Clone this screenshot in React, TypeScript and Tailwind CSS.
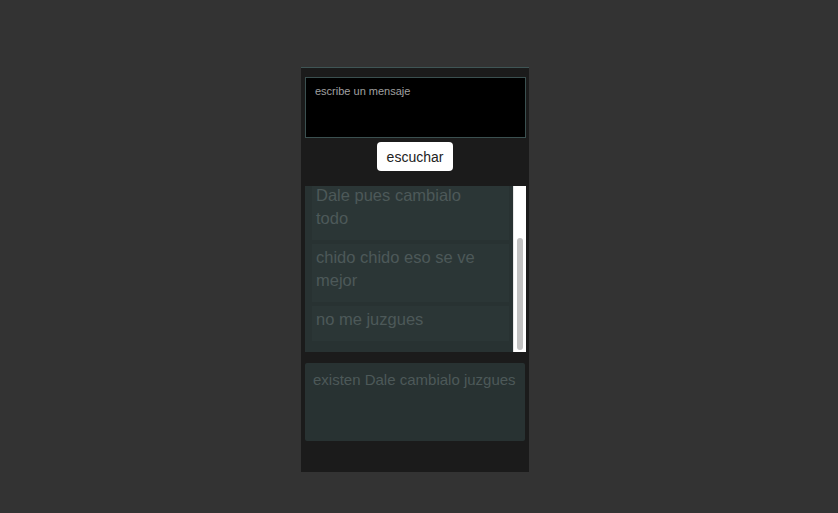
import React from 'react';

const mensajes = [
  'hola que tal como estas',
  'Dale pues cambialo todo',
  'chido chido eso se ve mejor',
  'no me juzgues',
];

const App: React.FC = () => {
  return (
    <div className="min-h-[513px] w-full bg-[#333333] flex justify-center pr-[8px] pt-[67px] font-['Liberation_Sans',Arial,sans-serif]">
      <div className="w-[228px] h-[405px] bg-[#1b1b1b] border-t border-[#3f5555] flex flex-col px-1 pt-[9px]">
        {/* entrada */}
        <textarea
          placeholder="escribe un mensaje"
          className="w-[221px] h-[61px] bg-black border border-[#3b5050] resize-none px-[9px] py-[5px] text-[11px] text-[#9a9a9a] placeholder:text-[#a0a0a0] outline-none"
        />
        <div className="flex justify-center mt-[4px]">
          <button className="w-[76px] h-[29px] p-0 bg-white rounded-[4px] text-[14px] leading-[20px] text-[#222]">
            escuchar
          </button>
        </div>

        {/* historial */}
        <div className="mt-[15px] w-[221px] h-[166px] bg-[#283232] flex">
          <div className="flex-1 overflow-hidden flex flex-col justify-end gap-[4px] pl-[7px] pr-[4px] pb-[11px]">
            {mensajes.map((m) => (
              <div
                key={m}
                className="shrink-0 bg-[#2b3636] pl-[4px] pr-[22px] pt-[2px] pb-[10px] text-[16.5px] leading-[23px] text-[#4d5959]"
              >
                {m}
              </div>
            ))}
          </div>
          <div className="w-[13px] bg-white border-l border-[#e6e6e6] flex flex-col justify-end items-center pb-[2px]">
            <div className="w-[6px] h-[112px] rounded-full bg-[#c2c2c2]" />
          </div>
        </div>

        {/* resultado */}
        <div className="mt-[11px] w-[220px] h-[78px] bg-[#283232] rounded-[2px] px-[8px] pt-[7px] text-[15px] leading-[20px] text-[#4d5959]">
          existen Dale cambialo juzgues
        </div>
      </div>
    </div>
  );
};

export default App;
